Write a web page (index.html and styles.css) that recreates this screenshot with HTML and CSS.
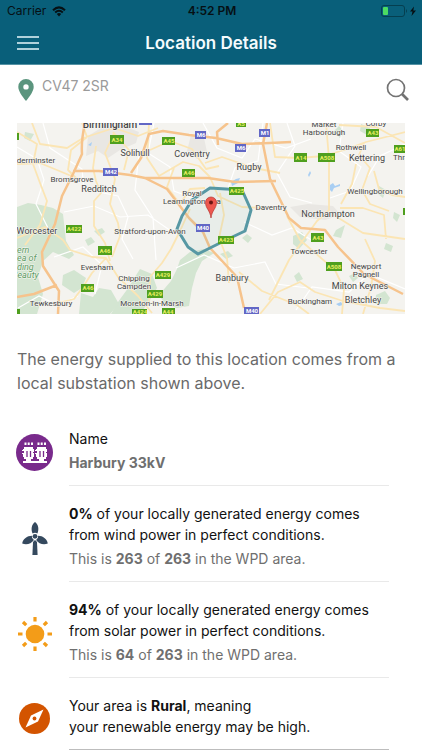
FILE: index.html
```html
<!DOCTYPE html>
<html lang="en">
<head>
<meta charset="utf-8">
<meta name="viewport" content="width=device-width, initial-scale=1">
<title>Location Details</title>
<link rel="stylesheet" href="styles.css">
</head>
<body>
<header class="header">
  <div class="status">
    <div class="carrier">Carrier
      <svg width="14" height="11" viewBox="0 0 14 11" aria-hidden="true"><path d="M1 4.200Q7-1.500 13 4.200M3.200 6.500Q7 3 10.800 6.500" fill="none" stroke="currentColor" stroke-width="2"/><path d="M4.800 8Q7 6 9.200 8L7 10.400Z" fill="currentColor"/></svg>
    </div>
    <div class="clock">4:52 PM</div>
    <div class="battery">
      <svg width="36" height="12" viewBox="0 0 36 12" aria-hidden="true"><rect x=".5" y=".5" width="23" height="11" rx="2.500" fill="none" stroke="#053f50"/><rect x="2" y="2" width="5" height="8" rx="1" fill="#4cdc62"/><path d="M25 4q2 2 0 4Z" fill="#053f50"/><path d="M33 1.500 29 6.500h2.500L30.500 11 35 5.500h-2.700Z" fill="#061014"/></svg>
    </div>
  </div>
  <div class="nav">
    <button class="icon-button" type="button" aria-label="Menu">
      <svg width="22" height="14" viewBox="0 0 22 14" aria-hidden="true"><path d="M0 1h22M0 7h22M0 13h22" stroke="#e8f7fb" stroke-width="1.700"/></svg>
    </button>
    <h1 class="title">Location Details</h1>
  </div>
</header>
<main class="main">
  <form class="search">
    <svg width="16" height="22" viewBox="0 0 16 22" aria-hidden="true"><path fill-rule="evenodd" d="M8 0a7.700 7.700 0 0 0-7.700 7.700C.3 12 4 17 8 22c4-5 7.700-10 7.700-14.300A7.700 7.700 0 0 0 8 0Zm0 5.200a2.700 2.700 0 1 1 0 5.400 2.700 2.700 0 0 1 0-5.400Z" fill="#5b957e"/></svg>
    <input class="postcode" type="text" value="CV47 2SR" aria-label="Postcode">
    <button class="icon-button" type="submit" aria-label="Search">
      <svg width="24" height="24" viewBox="0 0 24 24" aria-hidden="true"><circle cx="10" cy="10" r="8.500" fill="none" stroke="#737373" stroke-width="1.700"/><path d="m16 16 6 6" stroke="#737373" stroke-width="2.700"/></svg>
    </button>
  </form>
  <svg class="map" viewBox="17 123 388 191" role="img" aria-label="Map of the local substation area">
    <rect x="17" y="123" width="388" height="191" fill="#f4f3ef"/>
    <g fill="#e9e7e3">
      <path d="m88 136 13-8 20-3 18 7-3 11-16 7-12 8-10-7-12 5Zm103-1 13 3 3 14-10 7-10-8Zm99 72 18-3 25 2 8 9-16 5-25-3ZM30 230l14-8 12 8-8 12-14-3Z"/>
    </g>
    <g fill="#d3e5d1">
      <path d="m17 207 11-4 13 2 12 3 10 6 3 27 8 14-5 4-16-7-10 9-5 16 5 17-6 20H17ZM63 275l11-5 12 8-4 10-8 5-12-8Zm48 39 7-12 8-11 14-22 12 5 5 14-7 12-10 14Zm69-54 10-8 14-3 10 4-12 8-6 12-4 15-3 18-12 2-12-4-6-9 12-14 6-12Z"/>
      <path d="m81 293 12 4 6-9 12 2 8 14-9 10H79Zm252-161 6-6 6 7-5 5Zm28-8 9 4-3 7-7-4Zm-68 112 9-4 5 8-8 9-6-5Zm43-6 9-5-4 13-8-2Zm43-44 7 4-3 8-6-5Zm-3 109 9-4 5 7-3 6h-12ZM25 132l9 2-4 7-6-3Zm217 106 5-4 5 4-4 5ZM85 240l6-3 4 5-7 4Zm9-9 8-3 3 4-6 4Z"/>
      <path d="m386 243 7 3-2 6-7-3Zm-92 33 5-4 4 7-6 3Zm55 0 6-3 3 5-5 4Zm-129-22 8-3 5 5-7 3Zm174-42 6 3-3 7-4-4Z"/>
    </g>
    <path d="m231 182 5-3 4-1-2 5-6 3Zm99 3 3-2 2 3 5-2v2l-6 2-2 4-2-2Zm-22-10 2-4 1 2-2 4Zm28 129 5-2 2 3-4 1ZM88 145l4-3-1 4Z" fill="#a8cef3"/>
    <g fill="none" stroke="#ffffff" stroke-width="1.200">
      <path d="m17 147 20 12 7 21-8 24 12 24M43 123l7 25 32 21 2 20 34 7 10 21-6 22 11 20M64 212l30-6 26 11 28-2 23 16M54 257l29-10 19 18-7 29M139 154l-4 36 18 28 3 42M154 123l-6 30 22 14 4 24 24 9M203 123l14 25 25 10 13-19 31 9 25-9M263 123l-5 38-23 7-8 23M287 123l8 23-18 27 13 24 22 6M343 123l-4 28 22 16-11 24-20 7M405 144l-25 12-12 20M176 268l28-13 30 13 31-6 11 22 32 4M244 222l28 13 20-7 21 13M296 310l16-23 37 5 20-18 36 15M18 308l21-12 18 9 21-9"/>
    </g>
    <g fill="none" stroke="#fbe5b4" stroke-width="1.800" stroke-linejoin="round">
      <path d="M17 132l20 12-4 20 7 19 7 18-7 24-15 20M82 123l5 14-16 13-3 20 10 10M32 123l8 21 27 4 16-10 31-10 24 8 20-8M17 164l23-1 29 12 4 1M96 146l-3 22 3 13 5 12-7 8v25l11 17 5 18M114 133l-9 20 10 26-5 25 8 19 2 13-8 21M113 132l16 18-5 20M149 123l-2 35 12 18 24-14 16 4 11 11 8 19 24 11 25 1M150 150l20-9 22 8 14 20 13-3M205 163l17-6 32 11 26 5M174 168l-7 19 13 17 10-15 15-1M190 209l-10 22-9 18-9 14-12 14-1 28M17 238l28-11 18 13 7 10 22 7 14 1 12 19 20 19 14 17M106 258l-14 15-9 14-9 12-16 4M220 193l4 22-5 23 8 20 2 25M270 123l5 34 24 1 25-2 20-6 22-8 39-10M326 123l3 36 0 51-12 11-16 22-12 17-11 22-9 18M364 143l-5 12 11 13-8 22 8 14 19 7M405 143l-29-16-37-2M356 164l-4 20-11 20M374 171l5 18 13 6 13 2M340 208l23 0 21 7 2 24M287 216l13 24 35 30 9 19-2 25M332 214l31 19 42 6M260 314l18-22 22-10 15 10 28 9 37 7 25 3M239 272l23 19 35 14 12 9M365 239l10 22-4 26-8 27"/>
    </g>
    <g fill="none" stroke="#f6c38c" stroke-width="2.500" stroke-linejoin="round">
      <path d="M85 123q-4 18-3 31l-9 20-11 22-7 28-13 28 1 14 16 25-1 23M73 171l26 0 31 4 15 3 22 11 22 29 14 14 7 16 27 29 7 31M131 173l10-15 8-24 14-3 26 4 27 3 26 6 28-1 21-1M218 145l-1-13 11-9M267 123l-4 21 7 35 19 39 12 10 24 2 13 17 26 27 39 20M145 178l63 0 27 4 41-1M57 285l-23 9-17 3"/>
    </g>
    <path d="m177 229 5-13 10-16 18-12 32 2 9 20-6 21-19 9-28 14-10-7Z" fill="#65a1ac" fill-opacity=".08" stroke="#5798a4" stroke-width="3" stroke-linejoin="round"/>
    <g class="place">
      <text class="city" x="110" y="128">Birmingham</text>
      <text x="135" y="156">Solihull</text><text x="192" y="157">Coventry</text><text x="249" y="170">Rugby</text>
      <text x="99" y="192">Redditch</text><text x="328" y="217">Northampton</text><text x="367" y="161">Kettering</text>
      <text x="37" y="234">Worcester</text><text x="232" y="281">Banbury</text><text x="360" y="289">Milton Keynes</text><text x="363" y="303">Bletchley</text>
      <g class="town"><text x="36" y="163">derminster</text><text x="72" y="182">Bromsgrove</text><text x="192" y="196">Royal</text><text x="192" y="204">Leamington Spa</text><text x="271" y="210">Daventry</text><text x="324" y="127">Market</text><text x="324" y="135">Harborough</text><text x="351" y="150">Rothwell</text><text x="401" y="160">Thra</text><text x="376" y="126">Corby</text><text x="375" y="194">Wellingborough</text><text x="309" y="254">Towcester</text><text x="366" y="269">Newport</text><text x="366" y="277">Pagnell</text><text x="310" y="304">Buckingham</text><text x="150" y="234">Stratford-upon-Avon</text><text x="97" y="270">Evesham</text><text x="134" y="281">Chipping</text><text x="134" y="289">Campden</text><text x="152" y="306">Moreton-in-Marsh</text><text x="51" y="306">Tewkesbury</text></g>
      <g class="region"><text x="17" y="253">ern</text><text x="17" y="261">ea of</text><text x="17" y="270">ding</text><text x="12" y="278">Beauty</text></g>
    </g>
    <g fill="#4f9f1e">
      <path d="M110 135h14v9h-14zM162 137h13v8h-13zM182 169h13v8h-13zM236 121h10v6h-10zM229 187h15v8h-15zM294 153h13v9h-13zM318 153h17v9h-17zM366 129h13v8h-13zM394 145h11v8h-11zM66 225h16v8H66zM98 246h14v9H98zM81 284h13v8H81zM132 309h15v5h-15zM155 271h16v8h-16zM147 290h16v8h-16zM162 308h13v6h-13zM218 236h16v8h-16zM311 233h13v9h-13zM326 262h16v9h-16zM403 208h2v7h-2zM17 133h2v7h-2zM17 309h3v5h-3z"/>
    </g>
    <g fill="#6267c5"><path d="M103 168h15v8h-15zM195 131h11v8h-11zM235 144h11v8h-11zM259 129h11v8h-11zM196 224h14v8h-14zM244 307h15v7h-15zM139 121h13v4h-13z"/></g>
    <g class="shield">
      <text x="117" y="142">A34</text><text x="169" y="143">A45</text><text x="189" y="175">A46</text><text x="241" y="126">A5</text><text x="237" y="193">A425</text><text x="301" y="160">A14</text><text x="327" y="160">A508</text><text x="373" y="135">A43</text><text x="400" y="151">A61</text><text x="74" y="231">A422</text><text x="105" y="253">A46</text><text x="88" y="290">A46</text><text x="163" y="277">A429</text><text x="155" y="296">A429</text><text x="140" y="314">A424</text><text x="168" y="314">A44</text><text x="226" y="242">A423</text><text x="318" y="240">A43</text><text x="334" y="269">A508</text>
      <g class="motorway"><text x="111" y="174">M42</text><text x="201" y="137">M6</text><text x="241" y="150">M6</text><text x="265" y="135">M1</text><text x="203" y="230">M40</text><text x="252" y="313">M40</text></g>
    </g>
    <path d="M211 218c-1-8-5.500-9.500-5.500-15.500a5.500 5.500 0 0 1 11 0c0 6-4.500 7.500-5.500 15.500Z" fill="#ed574e" stroke="#b53531" stroke-width=".7"/><circle cx="211" cy="202.500" r="2" fill="#6b1411"/>
  </svg>
  <p class="intro">The energy supplied to this location comes from a local substation shown above.</p>
  <ul class="facts">
    <li class="fact">
      <div class="fact-icon">
        <svg width="37" height="37" viewBox="0 0 37 37" aria-hidden="true"><circle cx="18.500" cy="18.500" r="18.500" fill="#792a8c"/><g fill="#fff"><path d="M7 27h24v2H7zM10 25h5v3h-5zM23 25h5v3h-5z"/><path d="M8 13h9v2h1v3h-1v1h1v4h-1v2H8v-2H7v-3H6v-1h2v-2H6v-1h1v-1h1zM21 13h9v2h1v3h-1v1h1v4h-1v2h-9v-2h-1v-3h-1v-1h2v-2h-2v-1h1v-1h1z"/><path d="M8.500 8.500h2V11h-2zM11.700 8.500h2V11h-2zM15 8.500h2V11h-2zM21.500 8.500h2V11h-2zM24.700 8.500h2V11h-2zM28 8.500h2V11h-2z"/></g><path d="M11 17v6M14.500 17v6M24 17v6M27.500 17v6" stroke="#792a8c" stroke-width="1.300"/></svg>
      </div>
      <div class="fact-text"><p>Name</p><p class="note"><b>Harbury 33kV</b></p></div>
    </li>
    <li class="fact">
      <div class="fact-icon">
        <svg width="26" height="33" viewBox="0 0 26 33" aria-hidden="true"><g fill="#35495e"><circle cx="13" cy="14.300" r="2.400"/><path d="M10.600 11.500C8.700 7.500 9.600 2.200 13 0c3.400 2.200 4.300 7.500 2.400 11.500q-2.400-1.400-4.800 0Z"/><path d="M9.800 13.800Q9.700 16.800 11.900 18C9.300 22 4.300 23 .2 21.500 1 17 5.200 13.800 9.800 13.800Z"/><path d="M16.200 13.800Q16.300 16.800 14.100 18c2.600 4 7.600 5 11.700 3.500C25 17 20.800 13.800 16.200 13.800Z"/><path d="M11 20 13 18l2 2 .6 13h-5.200Z"/></g></svg>
      </div>
      <div class="fact-text"><p><b>0%</b> of your locally generated energy comes<br>from wind power in perfect conditions.</p><p class="note">This is <b>263</b> of <b>263</b> in the WPD area.</p></div>
    </li>
    <li class="fact">
      <div class="fact-icon">
        <svg width="34" height="34" viewBox="0 0 34 34" aria-hidden="true"><circle cx="17" cy="17" r="9.300" fill="#f39c18"/><path d="M17 0v4.500M17 29.500V34M0 17h4.500M29.500 17H34M5 5l3.200 3.200M25.800 25.800 29 29M5 29l3.200-3.200M25.800 8.200 29 5" stroke="#f39c18" stroke-width="3.200"/></svg>
      </div>
      <div class="fact-text"><p><b>94%</b> of your locally generated energy comes<br>from solar power in perfect conditions.</p><p class="note">This is <b>64</b> of <b>263</b> in the WPD area.</p></div>
    </li>
    <li class="fact fact-last">
      <div class="fact-icon">
        <svg width="31" height="31" viewBox="0 0 31 31" aria-hidden="true"><circle cx="15.500" cy="15.500" r="15.500" fill="#d35400"/><path d="M24.500 6.500 19 18.500l-12.500 6 5.500-12Z" fill="#fff"/><circle cx="15.500" cy="15.500" r="1.900" fill="#d35400"/></svg>
      </div>
      <div class="fact-text"><p>Your area is <b>Rural</b>, meaning<br>your renewable energy may be high.</p></div>
    </li>
  </ul>
</main>
</body>
</html>
```
FILE: styles.css
```css
* { box-sizing: border-box; }
body { margin: 0; background: #fff; color: #111; font: 14px/21px Inter, "Liberation Sans", sans-serif; }
p, h1, ul { margin: 0; padding: 0; }
svg { display: block; }
b { font-weight: 700; }
.header { background: #095f7a; border-bottom: 1px solid #5593a5; }
.status { display: grid; grid-template-columns: 1fr auto 1fr; align-items: center; height: 22px; padding: 0 5px 0 7px; color: #061014; font-size: 12px; line-height: 22px; }
.carrier { display: flex; align-items: center; gap: 6px; }
.clock { font-weight: 600; }
.battery { display: flex; justify-content: flex-end; }
.nav { display: grid; grid-template-columns: 40px 1fr 40px; align-items: center; height: 42px; padding: 0 8px; }
.icon-button { display: flex; align-items: center; justify-content: center; height: 40px; width: 40px; padding: 0; border: 0; background: none; }
.title { text-align: center; color: #f4fbfd; font-size: 17px; line-height: 24px; font-weight: 600; }
.search { display: flex; align-items: center; gap: 8px; height: 50px; padding: 0 4px 0 18px; }
.postcode { flex: 1; min-width: 0; padding: 0 0 8px; border: 0; background: none; color: #9a9a9a; font: 14px/20px Inter, "Liberation Sans", sans-serif; }
.map { width: calc(100% - 34px); margin: 8px 17px 0; }
.place text { fill: #454545; font: 9px Roboto, sans-serif; text-anchor: middle; paint-order: stroke; stroke: #f7f6f2; stroke-width: 1px; }
.place .city { font-size: 10px; font-weight: 500; }
.place .town text { font-size: 8px; }
.place .region text { fill: #5b9b62; font-size: 9px; font-style: italic; text-anchor: start; }
.shield text { fill: #e9ef62; font: bold 6px Roboto, sans-serif; text-anchor: middle; }
.shield .motorway text { fill: #fff; }
.intro { margin: 33px 17px 16px; color: #6a6a6a; font-size: 16px; line-height: 24px; }
.facts { list-style: none; padding: 0 33px 0 16px; }
.fact { display: flex; gap: 16px; }
.fact-icon { display: flex; flex: 0 0 37px; align-items: center; justify-content: center; padding-top: 8px; }
.fact-text { flex: 1; padding: 17px 0 12px; border-bottom: 1px solid #e9e9e9; }
.fact-last .fact-text { border-color: #bdbdbd; }
.note { margin-top: 3px; color: #6f6f6f; }
```
